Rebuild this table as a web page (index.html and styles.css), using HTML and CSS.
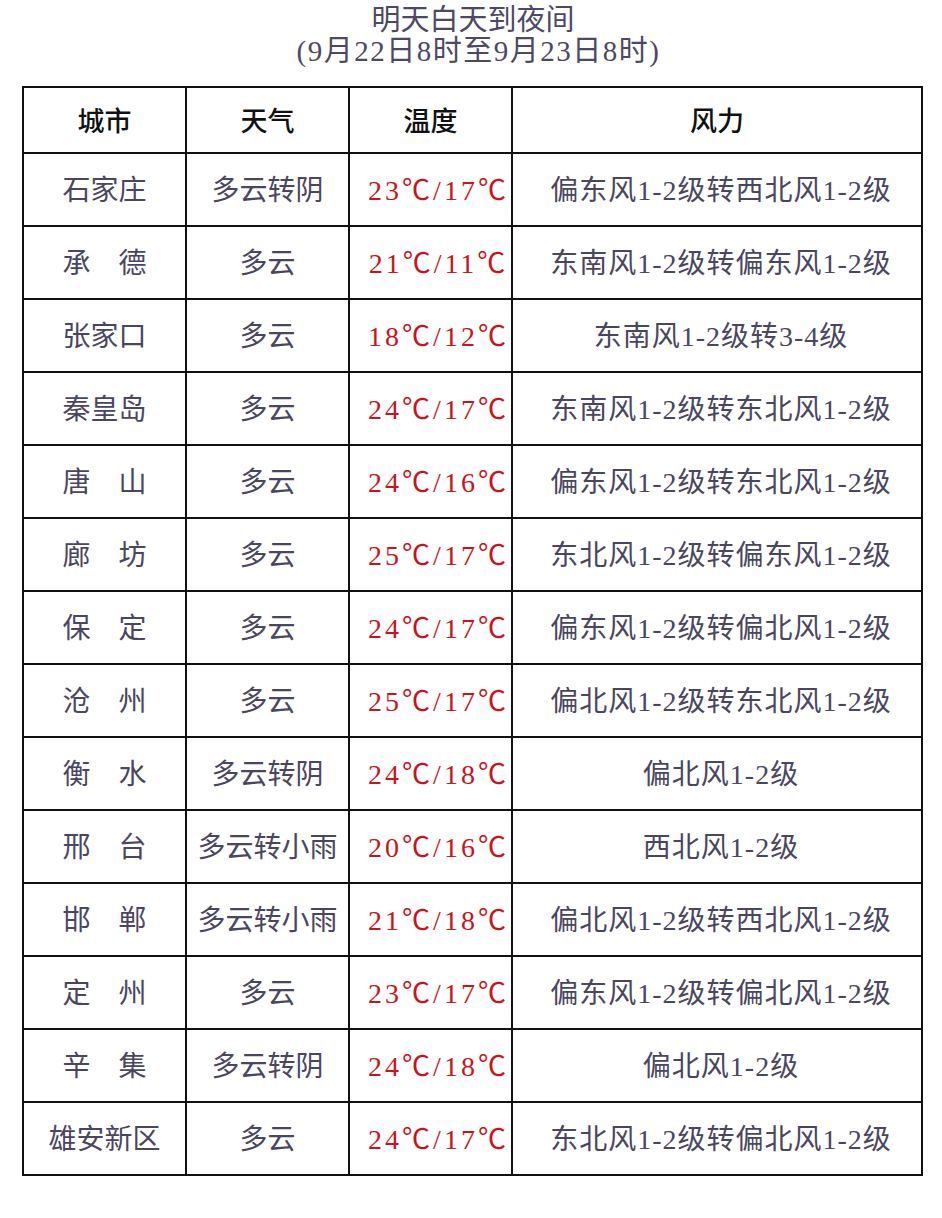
FILE: index.html
```html
<!DOCTYPE html>
<html lang="zh-CN">
<head>
<meta charset="utf-8">
<title>明天白天到夜间</title>
<link rel="stylesheet" href="styles.css">
</head>
<body>
<div class="page">
  <h1 class="title"><span class="l1">明天白天到夜间</span><span class="l2">(9月22日8时至9月23日8时)</span></h1>
  <table class="wx">
    <colgroup>
      <col class="c1"><col class="c2"><col class="c3"><col class="c4">
    </colgroup>
    <thead>
      <tr><th>城市</th><th>天气</th><th>温度</th><th>风力</th></tr>
    </thead>
    <tbody>
      <tr><td>石家庄</td><td>多云转阴</td><td class="t">23℃/17℃</td><td class="w">偏东风1-2级转西北风1-2级</td></tr>
      <tr><td>承　德</td><td>多云</td><td class="t">21℃/11℃</td><td class="w">东南风1-2级转偏东风1-2级</td></tr>
      <tr><td>张家口</td><td>多云</td><td class="t">18℃/12℃</td><td class="w">东南风1-2级转3-4级</td></tr>
      <tr><td>秦皇岛</td><td>多云</td><td class="t">24℃/17℃</td><td class="w">东南风1-2级转东北风1-2级</td></tr>
      <tr><td>唐　山</td><td>多云</td><td class="t">24℃/16℃</td><td class="w">偏东风1-2级转东北风1-2级</td></tr>
      <tr><td>廊　坊</td><td>多云</td><td class="t">25℃/17℃</td><td class="w">东北风1-2级转偏东风1-2级</td></tr>
      <tr><td>保　定</td><td>多云</td><td class="t">24℃/17℃</td><td class="w">偏东风1-2级转偏北风1-2级</td></tr>
      <tr><td>沧　州</td><td>多云</td><td class="t">25℃/17℃</td><td class="w">偏北风1-2级转东北风1-2级</td></tr>
      <tr><td>衡　水</td><td>多云转阴</td><td class="t">24℃/18℃</td><td class="w">偏北风1-2级</td></tr>
      <tr><td>邢　台</td><td>多云转小雨</td><td class="t">20℃/16℃</td><td class="w">西北风1-2级</td></tr>
      <tr><td>邯　郸</td><td>多云转小雨</td><td class="t">21℃/18℃</td><td class="w">偏北风1-2级转西北风1-2级</td></tr>
      <tr><td>定　州</td><td>多云</td><td class="t">23℃/17℃</td><td class="w">偏东风1-2级转偏北风1-2级</td></tr>
      <tr><td>辛　集</td><td>多云转阴</td><td class="t">24℃/18℃</td><td class="w">偏北风1-2级</td></tr>
      <tr><td>雄安新区</td><td>多云</td><td class="t">24℃/17℃</td><td class="w">东北风1-2级转偏北风1-2级</td></tr>
    </tbody>
  </table>
</div>
</body>
</html>
```

FILE: styles.css
```css
html, body {
  margin: 0;
  padding: 0;
  background: #ffffff;
}

body {
  font-family: "Liberation Serif", "Noto Sans CJK SC", serif;
  color: #4a4660;
}

.page {
  padding: 5px 20px 0 22px;
}

.title {
  margin: 0 0 19px 0;
  text-align: center;
  font-size: 29px;
  font-weight: normal;
  color: #4d4864;
}

.title .l1,
.title .l2 {
  display: block;
  line-height: 31px;
}

.title .l1 {
  padding-left: 2px;
}

.title .l2 {
  letter-spacing: 1.5px;
  padding-left: 13px;
}

.wx {
  width: 901px;
  border-collapse: collapse;
  table-layout: fixed;
}

.c1, .c2, .c3 { width: 163px; }
.c4 { width: auto; }

.wx th, .wx td {
  border: 2px solid #111111;
  text-align: center;
  vertical-align: middle;
  padding: 3px 0 0 0;
  white-space: nowrap;
  line-height: 40px;
}

.wx th {
  height: 61px;
  font-size: 27px;
  color: #111111;
  font-weight: 500;
}

.wx td {
  height: 68px;
  font-size: 28px;
  color: #4a4660;
}

.wx td.t {
  color: #c8141c;
  letter-spacing: 3px;
  padding-left: 16px;
}

.wx td.w {
  letter-spacing: 1px;
  padding-left: 8px;
}
```
